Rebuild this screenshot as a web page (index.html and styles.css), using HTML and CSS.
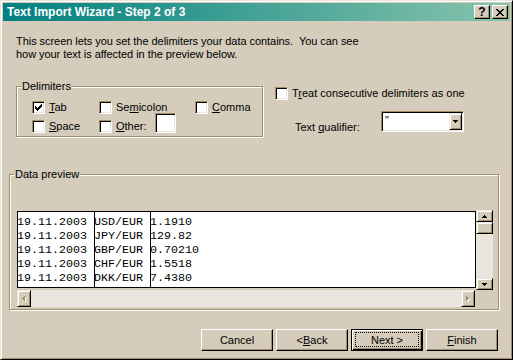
FILE: index.html
```html
<!DOCTYPE html>
<html lang="en">
<head>
    <meta charset="UTF-8">
    <title>Text Import Wizard - Step 2 of 3</title>
    <link rel="stylesheet" href="styles.css">
</head>
<body>
    <div class="window">
        <div class="titlebar">
            <span class="title">Text Import Wizard - Step 2 of 3</span>
            <div class="title-buttons">
                <span class="tbtn help">?</span>
                <span class="tbtn">
                    <svg width="8" height="7" viewBox="0 0 8 7"><path d="M0 0h2v1H0zM6 0h2v1H6zM1 1h2v1H1zM5 1h2v1H5zM2 2h4v1H2zM3 3h2v1H3zM2 4h4v1H2zM1 5h2v1H1zM5 5h2v1H5zM0 6h2v1H0zM6 6h2v1H6z"/></svg>
                </span>
            </div>
        </div>

        <div class="content">
            <p class="intro">This screen lets you set the delimiters your data contains.&nbsp; You can see<br>how your text is affected in the preview below.</p>

            <div class="options">
                <div class="group delimiters">
                    <span class="group-label">Delimiters</span>
                    <div class="delim-grid">
                        <label class="check">
                            <span class="box"><svg width="7" height="7" viewBox="0 0 7 7"><path d="M0 2h1v3H0zM1 3h1v3H1zM2 4h1v3H2zM3 3h1v3H3zM4 2h1v3H4zM5 1h1v3H5zM6 0h1v3H6z"/></svg></span>
                            <span><u>T</u>ab</span>
                        </label>
                        <label class="check">
                            <span class="box"></span>
                            <span>Se<u>m</u>icolon</span>
                        </label>
                        <label class="check">
                            <span class="box"></span>
                            <span><u>C</u>omma</span>
                        </label>
                        <label class="check">
                            <span class="box"></span>
                            <span><u>S</u>pace</span>
                        </label>
                        <label class="check other">
                            <span class="box"></span>
                            <span><u>O</u>ther:</span>
                            <span class="textbox"></span>
                        </label>
                    </div>
                </div>

                <div class="side">
                    <label class="check">
                        <span class="box"></span>
                        <span>T<u>r</u>eat consecutive delimiters as one</span>
                    </label>
                    <div class="qualifier">
                        <span class="qual-label">Text <u>q</u>ualifier:</span>
                        <div class="combo">
                            <span class="combo-value">"</span>
                            <span class="raised combo-btn">
                                <svg width="5" height="3" viewBox="0 0 5 3"><path d="M0 0h5v1H0zM1 1h3v1H1zM2 2h1v1H2z"/></svg>
                            </span>
                        </div>
                    </div>
                </div>
            </div>

            <div class="group preview-group">
                <span class="group-label">Data preview</span>
                <div class="preview-main">
                    <div class="preview">
                        <div class="col col1">
                            <div>19.11.2003</div>
                            <div>19.11.2003</div>
                            <div>19.11.2003</div>
                            <div>19.11.2003</div>
                            <div>19.11.2003</div>
                        </div>
                        <div class="col col2">
                            <div>USD/EUR</div>
                            <div>JPY/EUR</div>
                            <div>GBP/EUR</div>
                            <div>CHF/EUR</div>
                            <div>DKK/EUR</div>
                        </div>
                        <div class="col col3">
                            <div>1.1910</div>
                            <div>129.82</div>
                            <div>0.70210</div>
                            <div>1.5518</div>
                            <div>7.4380</div>
                        </div>
                    </div>
                    <div class="vscroll">
                        <span class="raised vbtn">
                            <svg width="5" height="3" viewBox="0 0 5 3"><path d="M2 0h1v1H2zM1 1h3v1H1zM0 2h5v1H0z"/></svg>
                        </span>
                        <span class="raised thumb"></span>
                        <span class="track"></span>
                        <span class="raised vbtn">
                            <svg width="5" height="3" viewBox="0 0 5 3"><path d="M0 0h5v1H0zM1 1h3v1H1zM2 2h1v1H2z"/></svg>
                        </span>
                    </div>
                </div>
                <div class="hscroll">
                    <span class="raised hbtn">
                        <svg width="4" height="6" viewBox="0 0 4 6"><path class="hl" d="M3 1h1v5H3zM2 2h1v3H2zM1 3h1v1H1z"/><path class="dim" d="M2 0h1v5H2zM1 1h1v3H1zM0 2h1v1H0z"/></svg>
                    </span>
                    <span class="raised hbtn">
                        <svg width="4" height="6" viewBox="0 0 4 6"><path class="hl" d="M1 1h1v5H1zM2 2h1v3H2zM3 3h1v1H3z"/><path class="dim" d="M0 0h1v5H0zM1 1h1v3H1zM2 2h1v1H2z"/></svg>
                    </span>
                </div>
            </div>

            <div class="buttons">
                <button class="btn">Cancel</button>
                <button class="btn">&lt; <u>B</u>ack</button>
                <button class="btn default">Next &gt;</button>
                <button class="btn"><u>F</u>inish</button>
            </div>
        </div>
    </div>
</body>
</html>
```

FILE: styles.css
```css
* {
    box-sizing: border-box;
}
body {
    margin: 0;
    background-color: #d5ccbb;
    font-family: 'Liberation Sans', Arial, sans-serif;
    font-size: 11px;
    line-height: 13px;
    color: #000;
}
.window {
    width: 513px;
    height: 360px;
    padding: 2px;
    background-color: #d5ccbb;
    border: 1px solid;
    border-color: #eae6dd #000 #000 #eae6dd;
    box-shadow: inset 1px 1px #fff, inset -1px -1px #a28d68;
}

/* title bar */
.titlebar {
    height: 18px;
    display: flex;
    align-items: center;
    justify-content: space-between;
    padding: 0 2px 0 4px;
    background: linear-gradient(to right, #008080, #88c4ac);
}
.title {
    color: #fff;
    font-weight: bold;
    font-size: 12px;
}
.title-buttons {
    display: flex;
    gap: 2px;
}
.tbtn {
    width: 16px;
    height: 14px;
    display: flex;
    align-items: center;
    justify-content: center;
    background-color: #d5ccbb;
    border: 1px solid;
    border-color: #fff #000 #000 #fff;
    box-shadow: inset -1px -1px #a28d68;
}
.tbtn.help {
    font-weight: bold;
    font-size: 12px;
}

.content {
    padding: 0 11px 0 6px;
}
.intro {
    margin: 14px 0 0 7px;
    letter-spacing: -0.05px;
}

/* group boxes */
.group {
    position: relative;
    border: 1px solid #a28d68;
    box-shadow: inset 1px 1px #fff, 1px 1px #fff;
}
.group-label {
    position: absolute;
    top: -7px;
    left: 4px;
    padding: 0 1px;
    background-color: #d5ccbb;
}

.options {
    display: flex;
    align-items: flex-start;
    margin: 25px 0 0 7px;
}
.delimiters {
    width: 247px;
    height: 51px;
    padding: 14px 0 0 15px;
}
.delim-grid {
    display: grid;
    grid-template-columns: 67px 96px auto;
    row-gap: 6px;
}
.check {
    display: flex;
    align-items: center;
    gap: 4px;
    height: 13px;
    white-space: nowrap;
}
.box {
    width: 13px;
    height: 13px;
    flex-shrink: 0;
    display: flex;
    align-items: center;
    justify-content: center;
    background-color: #fff;
    border: 1px solid;
    border-color: #a28d68 #fff #fff #a28d68;
    box-shadow: inset 1px 1px #000, inset -1px -1px #eae6dd;
}
.textbox {
    width: 21px;
    height: 20px;
    margin: -7px 0 0 4px;
    background-color: #fff;
    border: 1px solid;
    border-color: #a28d68 #fff #fff #a28d68;
    box-shadow: inset 1px 1px #000, inset -1px -1px #eae6dd;
}

.side {
    margin: 1px 0 0 12px;
}
.qualifier {
    display: flex;
    margin-top: 11px;
    padding-left: 20px;
}
.qual-label {
    width: 86px;
    margin-top: 10px;
}
.combo {
    width: 83px;
    height: 21px;
    display: flex;
    justify-content: space-between;
    background-color: #fff;
    border: 1px solid;
    border-color: #a28d68 #fff #fff #a28d68;
    box-shadow: inset 1px 1px #000, inset -1px -1px #eae6dd;
    padding: 1px;
}
.combo-value {
    padding: 1px 0 0 2px;
    color: #000;
}
.raised {
    display: flex;
    align-items: center;
    justify-content: center;
    background-color: #d5ccbb;
    border: 1px solid;
    border-color: #eae6dd #000 #000 #eae6dd;
    box-shadow: inset 1px 1px #fff, inset -1px -1px #a28d68;
}
.combo-btn {
    width: 13px;
    height: 17px;
}

/* data preview */
.preview-group {
    width: 490px;
    height: 136px;
    margin-top: 37px;
    padding: 36px 0 0 7px;
}
.preview-main {
    display: flex;
}
.preview {
    width: 459px;
    height: 77px;
    display: flex;
    overflow: hidden;
    background-color: #fff;
    border: 1px solid #000;
    font-family: 'Liberation Mono', 'Courier New', monospace;
    font-size: 11.67px;
    line-height: 14px;
}
.col {
    padding-top: 3px;
    border-right: 1px solid #000;
}
.col div {
    text-indent: -1px;
    white-space: pre;
}
.col1 {
    width: 77px;
}
.col2 {
    width: 56px;
}
.col3 {
    flex: 1;
    border-right: none;
}
.vscroll {
    width: 17px;
    height: 80px;
    margin-top: -1px;
    display: flex;
    flex-direction: column;
    background-color: #eae6dd;
}
.vbtn,
.thumb {
    height: 12px;
}
.track {
    flex: 1;
}
.hscroll {
    width: 458px;
    height: 17px;
    display: flex;
    justify-content: space-between;
    background-color: #eae6dd;
}
.hbtn {
    width: 14px;
    height: 17px;
}
.hl {
    fill: #fff;
}
.dim {
    fill: #a28d68;
}

/* bottom buttons */
.buttons {
    display: flex;
    justify-content: flex-end;
    gap: 3px;
    margin-top: 19px;
    padding-right: 1px;
}
.btn {
    width: 72px;
    height: 22px;
    padding: 0;
    display: flex;
    align-items: center;
    justify-content: center;
    font: inherit;
    color: #000;
    background-color: #d5ccbb;
    border: 1px solid;
    border-color: #fff #000 #000 #fff;
    box-shadow: inset -1px -1px #a28d68;
    appearance: none;
}
.btn.default {
    position: relative;
    border-color: #000;
    box-shadow: inset 1px 1px #fff, inset -1px -1px #000, inset -2px -2px #a28d68;
}
.btn.default::after {
    content: "";
    position: absolute;
    inset: 2px 3px 3px 3px;
    border: 1px dotted #000;
}
```
